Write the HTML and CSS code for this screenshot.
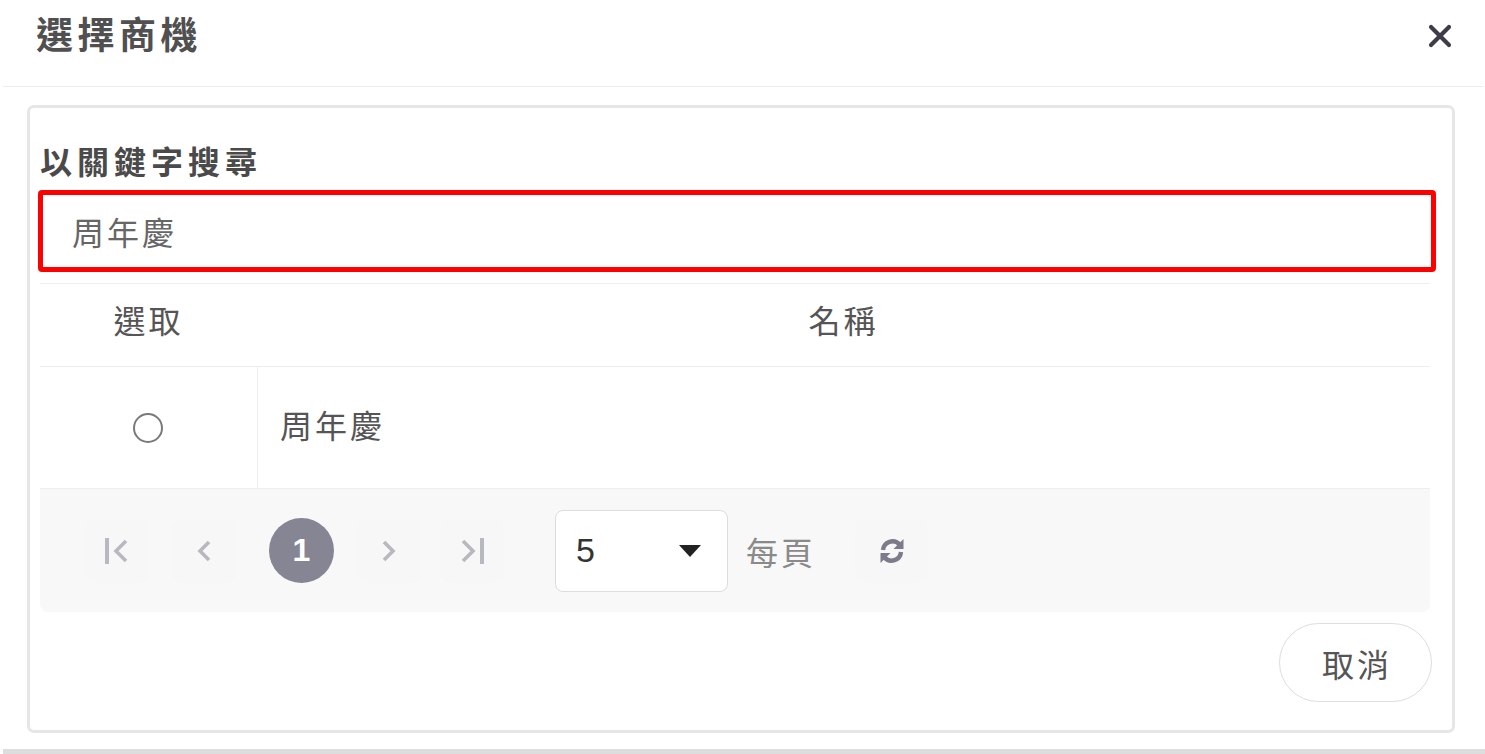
FILE: index.html
```html
<!DOCTYPE html>
<html>
    <head>
        <meta charset="utf-8">
        <title>選擇商機</title>
        <link rel="stylesheet" href="styles.css">
    </head>
    <body>
        <div class="modal">
            <!-- 標題 -->
            <div class="modal-header">
                <span class="modal-title">選擇商機</span>
                <button class="button-close" aria-label="close">
                    <svg width="26" height="26" viewBox="0 0 26 26">
                        <path d="M4 4 L22 22 M22 4 L4 22" stroke="#3d3d4a" stroke-width="4.2" stroke-linecap="round"/>
                    </svg>
                </button>
            </div>
            <!-- 內容 -->
            <div class="card">
                <div class="search-label">以關鍵字搜尋</div>
                <input class="search-input" type="text" value="周年慶">
                <div class="table">
                    <div class="table-head">
                        <div class="col-pick">選取</div>
                        <div class="col-name col-name-head">名稱</div>
                    </div>
                    <div class="table-row">
                        <div class="col-pick"><span class="radio"></span></div>
                        <div class="col-name col-name-cell">周年慶</div>
                    </div>
                    <!-- 分頁 -->
                    <div class="pager">
                        <span class="pager-button">
                            <svg width="28" height="28" viewBox="0 0 28 28">
                                <path d="M4 1 V27" stroke="#b8b8c0" stroke-width="4"/>
                                <path d="M23 4 L13 14 L23 24" fill="none" stroke="#b8b8c0" stroke-width="3.6"/>
                            </svg>
                        </span>
                        <span class="pager-button">
                            <svg width="28" height="28" viewBox="0 0 28 28">
                                <path d="M19 5 L10 14 L19 23" fill="none" stroke="#b8b8c0" stroke-width="3.6"/>
                            </svg>
                        </span>
                        <span class="pager-page">1</span>
                        <span class="pager-button">
                            <svg width="28" height="28" viewBox="0 0 28 28">
                                <path d="M9 5 L18 14 L9 23" fill="none" stroke="#b8b8c0" stroke-width="3.6"/>
                            </svg>
                        </span>
                        <span class="pager-button">
                            <svg width="28" height="28" viewBox="0 0 28 28">
                                <path d="M5 4 L15 14 L5 24" fill="none" stroke="#b8b8c0" stroke-width="3.6"/>
                                <path d="M24 1 V27" stroke="#b8b8c0" stroke-width="4"/>
                            </svg>
                        </span>
                        <div class="page-size">
                            <span class="page-size-value">5</span>
                            <svg width="24" height="14" viewBox="0 0 24 14">
                                <path d="M1 1 H23 L12 13 Z" fill="#222"/>
                            </svg>
                        </div>
                        <span class="page-size-label">每頁</span>
                        <span class="pager-refresh">
                            <svg width="32" height="32" viewBox="0 0 32 32">
                                <path d="M7 15 A9.5 9.5 0 0 1 23.5 9.5" fill="none" stroke="#7b7b89" stroke-width="4.4"/>
                                <path d="M27.5 4 V14 H17.5 Z" fill="#7b7b89"/>
                                <path d="M25 17 A9.5 9.5 0 0 1 8.5 22.5" fill="none" stroke="#7b7b89" stroke-width="4.4"/>
                                <path d="M4.5 28 V18 H14.5 Z" fill="#7b7b89"/>
                            </svg>
                        </span>
                    </div>
                </div>
                <div class="card-footer">
                    <button class="button-cancel">取消</button>
                </div>
            </div>
            <div class="modal-bottom"></div>
        </div>
    </body>
</html>
```

FILE: styles.css
```css
body {
    margin: 0;
    background: #fff;
    font-family: "Noto Sans CJK TC", "Noto Sans", sans-serif;
    color: #555;
}
.modal {
    width: 1485px;
    height: 754px;
    overflow: hidden;
}
.modal-header {
    display: flex;
    align-items: center;
    justify-content: space-between;
    height: 66px;
    padding: 0 30px 20px 36px;
    margin: 0 2px 0 3px;
    border-bottom: 1px solid #ededed;
}
.button-close {
    display: flex;
    padding: 0;
    margin: 6px 0 0 0;
    border: none;
    background: none;
    cursor: pointer;
}
.modal-title {
    margin-left: -3px;
    font-size: 37px;
    font-weight: bold;
    letter-spacing: 4.5px;
    color: #505050;
}
.card {
    margin: 18px 0 0 27px;
    width: 1390px;
    height: 590px;
    padding: 32px 22px 0 10px;
    border: 3px solid #e6e6e6;
    border-radius: 7px;
}
.search-label {
    font-size: 32px;
    line-height: 40px;
    font-weight: bold;
    letter-spacing: 5px;
    color: #4a4a4a;
}
.search-input {
    display: block;
    width: calc(100% + 8px);
    height: 82px;
    margin: 10px -6px 0 -2px;
    padding: 0 0 0 29px;
    box-sizing: border-box;
    border: 5px solid #ff0000;
    border-radius: 4px;
    font-family: inherit;
    font-size: 32px;
    letter-spacing: 3px;
    color: #666;
    outline: none;
}
.table {
    margin-top: 11px;
    border-top: 1px solid #eeeeee;
}
.table-head {
    display: flex;
    height: 82px;
    align-items: center;
    border-bottom: 1px solid #eeeeee;
    font-size: 32px;
    letter-spacing: 3px;
    color: #555;
}
.col-pick {
    width: 217px;
    flex: none;
    display: flex;
    align-items: center;
    justify-content: center;
    align-self: stretch;
}
.col-name {
    flex: 1;
    display: flex;
    align-items: center;
    align-self: stretch;
}
.table-head .col-pick,
.col-name-head {
    padding-bottom: 12px;
}
.col-name-head {
    justify-content: center;
}
.table-row {
    display: flex;
    height: 121px;
    font-size: 32px;
    letter-spacing: 3px;
    color: #555;
}
.col-name-cell {
    border-left: 1px solid #eeeeee;
    padding: 0 0 8px 22px;
}
.radio {
    width: 26px;
    height: 26px;
    border: 2px solid #7a7a7a;
    border-radius: 50%;
    margin-left: -2px;
}
.pager {
    display: flex;
    align-items: center;
    height: 123px;
    padding-left: 45px;
    border-top: 1px solid #eeeeee;
    border-radius: 0 0 8px 8px;
    background: #f8f8f8;
}
.pager-button {
    display: flex;
    align-items: center;
    justify-content: center;
    width: 64px;
    height: 64px;
    margin-right: 23px;
    border-radius: 10px;
    background: #f7f7f7;
}
.pager-button:nth-child(4) {
    margin-right: 19px;
}
.pager-page {
    display: flex;
    align-items: center;
    justify-content: center;
    width: 65px;
    height: 65px;
    margin: 0 23px 0 10px;
    border-radius: 50%;
    background: #868593;
    color: #fff;
    font-family: "Liberation Sans", Arial, sans-serif;
    font-size: 32px;
    font-weight: bold;
}
.page-size {
    display: flex;
    align-items: center;
    justify-content: space-between;
    width: 173px;
    height: 82px;
    margin-left: 28px;
    padding: 0 25px 0 20px;
    box-sizing: border-box;
    border: 1px solid #dddddd;
    border-radius: 8px;
    background: #fff;
}
.page-size-value {
    font-family: "Liberation Sans", Arial, sans-serif;
    font-size: 34px;
    color: #333;
}
.page-size-label {
    margin-left: 18px;
    font-size: 32px;
    letter-spacing: 3px;
    color: #8a8a8a;
}
.pager-refresh {
    display: flex;
    align-items: center;
    justify-content: center;
    width: 73px;
    height: 64px;
    margin-left: 39px;
    border-radius: 10px;
    background: #f7f7f7;
}
.card-footer {
    display: flex;
    justify-content: flex-end;
    margin-top: 11px;
}
.button-cancel {
    width: 153px;
    height: 79px;
    padding: 0 0 0 3px;
    margin-right: -2px;
    border: 1px solid #dddddd;
    border-radius: 40px;
    background: #fff;
    font-family: inherit;
    font-size: 32px;
    letter-spacing: 3px;
    color: #555;
    cursor: pointer;
}
.modal-bottom {
    height: 6px;
    margin: 16px 0 0 3px;
    background: #dddddd;
}
```
